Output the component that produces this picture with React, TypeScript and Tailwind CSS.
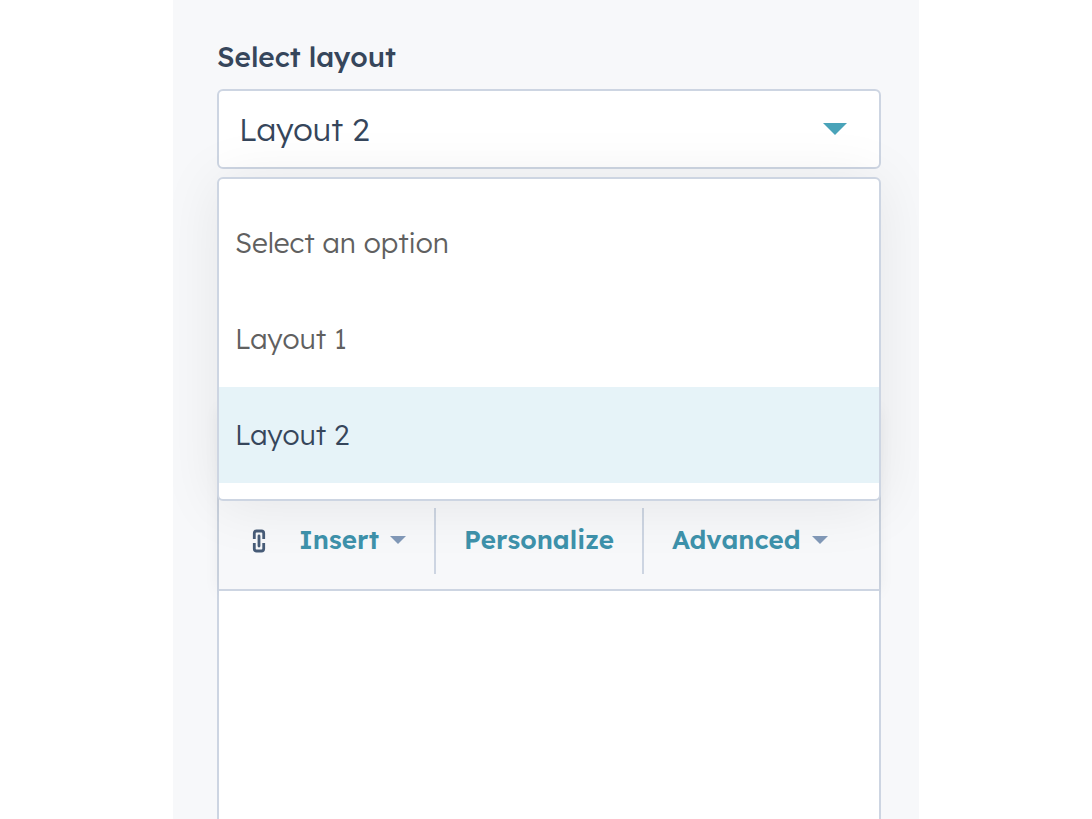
// ============================================================
// App.tsx
// Side panel with a layout picker and a rich text editor.
// The picker's option list opens over the editor toolbar.
// ============================================================

import { useState } from "react";

const OPTIONS = ["Select an option", "Layout 1", "Layout 2"];

// Small filled triangle, used by the picker and the toolbar menus
function Caret({ className }: { className: string }) {
  return (
    <svg viewBox="0 0 24 12" className={className} fill="currentColor" aria-hidden="true">
      <path d="M0 0h24L12 12z" />
    </svg>
  );
}

function LinkIcon() {
  return (
    <svg viewBox="0 0 14 24" className="h-6 w-3.5" fill="none" stroke="currentColor" aria-hidden="true">
      <path
        d="M2.3 10V4.2Q2.3 2 4.5 2h5Q11.7 2 11.7 4.2V10M2.3 14v5.8Q2.3 22 4.5 22h5Q11.7 22 11.7 19.8V14"
        strokeWidth="2.8"
      />
      <path d="M7 7v10" strokeWidth="2.8" strokeLinecap="round" />
    </svg>
  );
}

// ============================================================
// LayoutPicker
// ============================================================
function LayoutPicker() {
  const [value, setValue] = useState("Layout 2");
  const [isOpen, setIsOpen] = useState(true);

  function choose(option: string) {
    setValue(option);
    setIsOpen(false);
  }

  return (
    <div>
      <label htmlFor="layout" className="block text-[28px] leading-8 font-medium">
        Select layout
      </label>
      <div className="relative mt-4">
        <select
          id="layout"
          value={value}
          onChange={(e) => choose(e.target.value)}
          onFocus={() => setIsOpen(true)}
          className="block h-20 w-full appearance-none rounded-md border-2 border-[#cdd5e2] bg-white px-5 text-[32px] font-light outline-none"
        >
          {OPTIONS.map((option) => (
            <option key={option}>{option}</option>
          ))}
        </select>
        <div className="pointer-events-none absolute inset-y-0 right-[34px] flex items-center">
          <Caret className="h-3 w-6 text-[#49a3b9]" />
        </div>

        {isOpen && (
          <ul
            role="listbox"
            aria-label="Select layout"
            className="absolute inset-x-0 top-full z-10 mt-2 rounded-md border-2 border-[#cdd5e2] bg-white py-4 shadow-[0_4px_60px_rgba(0,0,0,0.08)]"
          >
            {OPTIONS.map((option) => (
              <li key={option} role="option" aria-selected={option === value}>
                <button
                  type="button"
                  onClick={() => choose(option)}
                  className={
                    option === value
                      ? "h-24 w-full bg-[#e6f3f8] px-4 text-left text-[28px] font-light"
                      : "h-24 w-full px-4 text-left text-[28px] font-light text-[#606060]"
                  }
                >
                  {option}
                </button>
              </li>
            ))}
          </ul>
        )}
      </div>
    </div>
  );
}

// ============================================================
// Editor
// ============================================================
function Editor() {
  return (
    <div className="mt-60 flex flex-1 flex-col border-x-2 border-[#cdd5e2]">
      <div className="flex h-[182px] items-end border-b-2 border-[#cdd5e2] pb-[15px] text-[26px] font-semibold text-[#3e92ab] shadow-[0_0_16px_rgba(0,0,0,0.06)]">
        <div className="flex h-[66px] w-full items-center">
          <button type="button" aria-label="Link" className="ml-[33px] text-[#475c78]">
            <LinkIcon />
          </button>
          <button type="button" className="ml-[33px] flex items-center gap-[11px] pb-1">
            Insert
            <Caret className="mt-0.5 h-2 w-4 text-[#8299b8]" />
          </button>
          <div className="ml-7 flex h-full items-center border-x-2 border-[#cdd5e2] px-7">
            <button type="button" className="pb-1">
              Personalize
            </button>
          </div>
          <button type="button" className="ml-7 flex items-center gap-[11px] pb-1">
            Advanced
            <Caret className="mt-0.5 h-2 w-4 text-[#8299b8]" />
          </button>
        </div>
      </div>
      <textarea aria-label="Content" className="relative block w-full flex-1 resize-none bg-white p-5 outline-none" />
    </div>
  );
}

export default function App() {
  return (
    <main className="min-h-screen bg-white font-['Lexend_Deca','Lexend','Inter',sans-serif] text-[#36465b]">
      <section className="mx-auto flex min-h-screen max-w-[746px] flex-col overflow-hidden bg-[#f7f8fa] pt-[41px] pr-[38px] pl-11">
        <LayoutPicker />
        <Editor />
      </section>
    </main>
  );
}
